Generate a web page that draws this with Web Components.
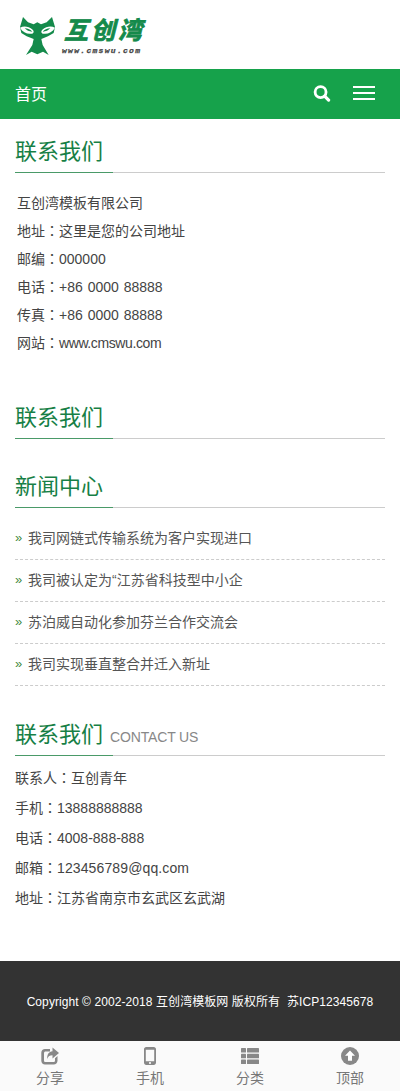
<!DOCTYPE html>
<html lang="zh-CN"><head><meta charset="utf-8"><title>互创湾</title>
<style>
html,body{margin:0;padding:0;background:#fff}
body{font-family:"Liberation Sans","Noto Sans CJK SC",sans-serif;font-size:14px;color:#333;width:400px}
.c{font-family:"Noto Sans CJK TC",sans-serif;line-height:0}
.w{letter-spacing:-.4px}.p{word-spacing:1px}.e{letter-spacing:.12px}
</style></head><body>
<site-header></site-header>
<site-nav></site-nav>
<sec-title style="--top:18px">联系我们</sec-title>
<info-list style="--pad:16px 0 0 17px;--lh:28px">
<div>互创湾模板有限公司</div><div>地址<span class="c" lang="zh-Hant">：</span>这里是您的公司地址</div><div>邮编<span class="c" lang="zh-Hant">：</span>000000</div><div>电话<span class="c" lang="zh-Hant">：</span><span class="p">+86 0000 88888</span></div><div>传真<span class="c" lang="zh-Hant">：</span><span class="p">+86 0000 88888</span></div><div>网站<span class="c" lang="zh-Hant">：</span><span class="w">www.cmswu.com</span></div>
</info-list>
<sec-title style="--top:46px">联系我们</sec-title>
<sec-title style="--top:33px">新闻中心</sec-title>
<news-list>
<news-item>我司网链式传输系统为客户实现进口</news-item>
<news-item>我司被认定为“江苏省科技型中小企</news-item>
<news-item>苏泊威自动化参加芬兰合作交流会</news-item>
<news-item>我司实现垂直整合并迁入新址</news-item>
</news-list>
<sec-title style="--top:34px;--pb:3px">联系我们<span slot="sub">CONTACT US</span></sec-title>
<info-list style="--pad:7px 0 0 15px;--lh:30px">
<div>联系人<span class="c" lang="zh-Hant">：</span>互创青年</div><div>手机<span class="c" lang="zh-Hant">：</span>13888888888</div><div>电话<span class="c" lang="zh-Hant">：</span>4008-888-888</div><div>邮箱<span class="c" lang="zh-Hant">：</span><span class="e">123456789@qq.com</span></div><div>地址<span class="c" lang="zh-Hant">：</span>江苏省南京市玄武区玄武湖</div>
</info-list>
<site-footer>Copyright © 2002-2018 互创湾模板网 版权所有&nbsp; 苏ICP12345678</site-footer>
<tab-bar>
<tab-item label="分享"><svg viewBox="0 0 18 18"><path fill="#888" d="M4 2h5v2.600H4.600C3.700 4.600 3 5.300 3 6.200v7.200c0 .9.7 1.600 1.600 1.600h7.800c.9 0 1.600-.7 1.600-1.600v-2.200l2.500-2.200v4.800c0 2.100-1.700 3.700-3.700 3.700H4c-2.100 0-3.700-1.600-3.700-3.700V5.700C.3 3.700 1.900 2 4 2z"/><path fill="#888" d="M11.500.5 18 6l-6.500 5.500V8.200C8.800 8.200 7 9.200 6.300 12c-.5-4.300 1.500-7.400 5.200-7.700z"/></svg></tab-item>
<tab-item label="手机"><svg viewBox="0 0 18 18"><path fill="#888" fill-rule="evenodd" d="M5.200 0h7.600C14 0 15 1 15 2.200v13.600c0 1.200-1 2.200-2.200 2.200H5.200C4 18 3 17 3 15.800V2.200C3 1 4 0 5.200 0zM4.800 2.800v11.400h8.400V2.800zM9 14.900a1.100 1.100 0 1 0 0 2.200 1.100 1.100 0 0 0 0-2.200z"/></svg></tab-item>
<tab-item label="分类"><svg viewBox="0 0 18 18"><g fill="#888"><rect x="0" y="1" width="5" height="4.500" rx=".6"/><rect x="6" y="1" width="12" height="4.500" rx=".6"/><rect x="0" y="6.800" width="5" height="4.500" rx=".6"/><rect x="6" y="6.800" width="12" height="4.500" rx=".6"/><rect x="0" y="12.600" width="5" height="4.500" rx=".6"/><rect x="6" y="12.600" width="12" height="4.500" rx=".6"/></g></svg></tab-item>
<tab-item label="顶部"><svg viewBox="0 0 18 18"><circle cx="9" cy="9" r="9" fill="#888"/><path fill="#fff" d="M9 3.600 14 8.800h-3v5H7v-5H4z"/></svg></tab-item>
</tab-bar>
<script>
const def=(name,html)=>customElements.define(name,class extends HTMLElement{constructor(){super();this.attachShadow({mode:'open'}).innerHTML=html}});
def('site-header',`<style>:host{display:flex;height:69px;box-sizing:border-box;padding:17px 0 0 20px;gap:9px;background:#fff}
svg{width:35px;height:38px;flex:none}
.t{display:flex;flex-direction:column;align-items:flex-start}
.n{font:italic 700 24px/26px "Liberation Sans","Noto Sans CJK SC",sans-serif;color:#148a4b;letter-spacing:3px;margin-top:1px;-webkit-text-stroke:.8px #148a4b;white-space:nowrap}
.u{font:italic 700 8px/10px "Liberation Mono",monospace;color:#444;-webkit-text-stroke:.25px #444;letter-spacing:1.3px;margin-top:2px;margin-left:-2px;white-space:nowrap}
</style>
<svg viewBox="6 6 105 114" preserveAspectRatio="none"><path fill="#148a4b" d="M15 6 30 22 47 28 58 22 69 28 86 22 102 6 111 36 107 54 90 64 70 72 74 90 92 120 75 110 58 118 41 110 24 120 43 90 47 72 26 64 10 54 6 36z"/><path fill="#fff" d="M6 38C18 32 32 34 44 44 50 50 46 56 40 56 28 58 14 52 6 38zM111 38C99 32 85 34 73 44 67 50 71 56 77 56 89 58 103 52 111 38z"/><path fill="#148a4b" d="M20 40C30 40 38 44 43 50 33 50 26 46 20 40zM97 40C87 40 79 44 74 50 84 50 91 46 97 40z"/></svg>
<div class="t"><div class="n">互创湾</div><div class="u">www.cmswu.com</div></div>`);
def('site-nav',`<style>:host{display:flex;align-items:center;height:50px;background:#16a24b;color:#fff;padding:0 25px 0 15px;font-size:16px}
.s{flex:1;margin-bottom:2px}svg{display:block;margin-bottom:2px}.a{margin-right:22px}
</style><span class="s">首页</span>
<svg class="a" width="18" height="17" viewBox="0 0 18 18"><circle cx="7.500" cy="7.500" r="5.800" fill="none" stroke="#fff" stroke-width="3"/><path d="M11.800 11.800 16 16" stroke="#fff" stroke-width="3.400" stroke-linecap="round"/></svg>
<svg width="22" height="14" viewBox="0 0 22 14"><path d="M0 1h22M0 7h22M0 13h22" stroke="#fff" stroke-width="2"/></svg>`);
def('sec-title',`<style>:host{display:block;margin:var(--top,0) 15px 0;position:relative;border-bottom:1px solid #ccc}
.h{font-size:22px;line-height:30px;color:#177f46;display:flex;align-items:baseline;gap:7px;padding-bottom:var(--pb,5px)}
::slotted(span){font-size:14px;color:#888;letter-spacing:-.15px}
.h::after{content:"";position:absolute;left:0;bottom:-1px;width:98px;height:1px;background:#4a9a68}
</style><div class="h"><slot></slot><slot name="sub"></slot></div>`);
def('info-list',`<style>:host{display:block;padding:var(--pad);line-height:var(--lh);color:#444}</style><slot></slot>`);
def('news-list',`<style>:host{display:block;margin:10px 15px 0}</style><slot></slot>`);
def('news-item',`<style>:host{display:flex;height:41px;line-height:40px;border-bottom:1px dashed #ccc;color:#555;font-size:14px}
i{font-style:normal;color:#3f8a3f;width:13px;font-size:13px}</style><i>»</i><slot></slot>`);
def('site-footer',`<style>:host{display:flex;justify-content:center;align-items:center;height:80px;margin-top:48px;background:#333;color:#fff;font-size:12px;letter-spacing:.08px;white-space:nowrap;padding-bottom:2px;box-sizing:border-box}</style><slot></slot>`);
def('tab-bar',`<style>:host{display:grid;grid-template-columns:repeat(4,1fr);height:50px;background:#fafafa}</style><slot></slot>`);
customElements.define('tab-item',class extends HTMLElement{constructor(){super();this.attachShadow({mode:'open'}).innerHTML=`<style>:host{display:flex;flex-direction:column;align-items:center;padding-top:6px;color:#777;font-size:14px;line-height:18px}
::slotted(svg){width:18px;height:18px;display:block;margin-bottom:4px}</style><slot></slot><span>${this.getAttribute('label')}</span>`}});
</script>
</body></html>
